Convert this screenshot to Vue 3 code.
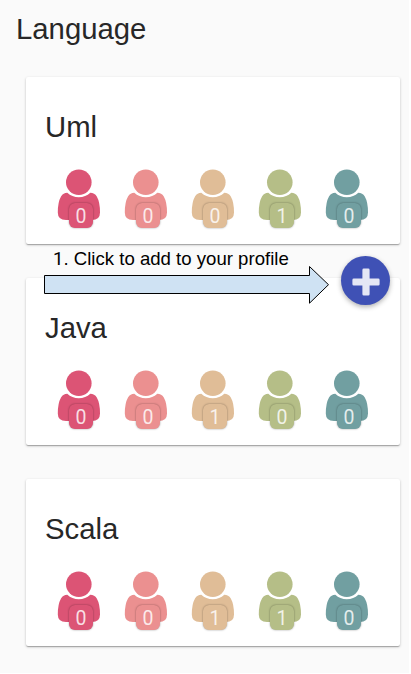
<script setup>
const people = ['#dc5475', '#eb9090', '#e0bd97', '#b5be87', '#719fa1']
const cards = [
  { name: 'Uml', counts: [0, 0, 0, 1, 0] },
  { name: 'Java', counts: [0, 0, 1, 0, 0] },
  { name: 'Scala', counts: [0, 0, 1, 1, 0] }
]
</script>

<template>
  <main class="page">
    <h1 class="title">Language</h1>
    <div class="list">
      <section v-for="card in cards" :key="card.name" class="card">
        <h2 class="name">{{ card.name }}</h2>
        <div class="people">
          <div v-for="(n, i) in card.counts" :key="i" class="person" :style="{ color: people[i] }">
            <svg class="figure" width="44" height="54" viewBox="0 0 44 54" fill="currentColor">
              <circle cx="21.8" cy="13.3" r="12.8" />
              <path d="M10.3 23.8Q15 28.2 21.8 28.2Q28.6 28.2 33.3 23.8Q37.5 23.8 39.8 27.5Q43 33 43 43.5Q43 51 35 51H9Q.8 51 .8 43.5Q.8 33 4 27.5Q6.3 23.8 10.3 23.8Z" />
            </svg>
            <span class="badge"><span class="count">{{ n }}</span></span>
          </div>
        </div>
      </section>
    </div>

    <div class="hint">
      <p class="hint-text"><span class="step">1</span>. Click to add to your profile</p>
      <svg class="arrow" width="286" height="40" viewBox="0 0 286 40">
        <path d="M.5 10.5H265.5V1.5L284.5 19.7L265.5 38.2V28.5H.5Z" fill="#cfe2f3" stroke="#000" stroke-width="1" />
      </svg>
    </div>
    <button class="add" aria-label="Add">
      <svg width="28" height="28" viewBox="0 0 28 28" fill="#e4e6f5">
        <path d="M11.8.5h4.4q1.4 0 1.4 1.4v8.6h8.6q1.4 0 1.4 1.4v4.3q0 1.4-1.4 1.4h-8.6v8.6q0 1.4-1.4 1.4h-4.4q-1.4 0-1.4-1.4v-8.6H1.8q-1.4 0-1.4-1.4v-4.3q0-1.4 1.4-1.4h8.6V1.9q0-1.4 1.4-1.4Z" />
      </svg>
    </button>
  </main>
</template>

<style>
body { background: #fff; }
</style>

<style scoped>
.page {
  position: relative;
  box-sizing: border-box;
  width: 409px;
  height: 673px;
  padding: 12px 9px 0 16px;
  overflow: hidden;
  background: #fafafa;
  color: #272727;
  font-family: "Liberation Sans", Arial, sans-serif;
}
.title, .name {
  margin: 0;
  font-size: 29.3px;
  line-height: 33px;
  font-weight: 400;
}
.list {
  display: flex;
  flex-direction: column;
  gap: 34px;
  margin-top: 32px;
  padding-left: 10px;
}
.card {
  box-sizing: border-box;
  width: 373.5px;
  height: 167px;
  padding: 33px 19px 0;
  border-radius: 2px;
  background: #fff;
  box-shadow: 0 1px 3px rgba(0, 0, 0, .2), 0 1px 1px rgba(0, 0, 0, .14), 0 2px 1px -1px rgba(0, 0, 0, .12);
}
.people {
  display: flex;
  gap: 23px;
  margin: 26px 0 0 12px;
}
.person {
  position: relative;
  width: 44px;
  height: 60px;
}
.figure { display: block; }
.badge {
  position: absolute;
  left: 12px;
  top: 34px;
  width: 24px;
  height: 25px;
  border-radius: 6px;
  background: currentColor;
  box-shadow: 0 0 2px rgba(0, 0, 0, .42);
  text-align: center;
}
.count {
  display: block;
  color: rgba(255, 255, 255, .82);
  font: 400 19.5px/28px Roboto, "Liberation Sans", sans-serif;
}
.hint {
  position: absolute;
  left: 44px;
  top: 248px;
  color: #000;
}
.hint-text {
  margin: 0 0 0 9px;
  font-size: 18.6px;
  line-height: 22px;
  white-space: nowrap;
}
.step {
  font-family: Roboto, "Liberation Sans", sans-serif;
}
.arrow { display: block; margin-top: -5px; }
.add {
  position: absolute;
  left: 341px;
  top: 256px;
  display: flex;
  align-items: center;
  justify-content: center;
  width: 49px;
  height: 49px;
  padding: 2px 0 0;
  border: 0;
  border-radius: 50%;
  background: #3f51b5;
  box-shadow: 0 2px 5px rgba(0, 0, 0, .3);
}
</style>
